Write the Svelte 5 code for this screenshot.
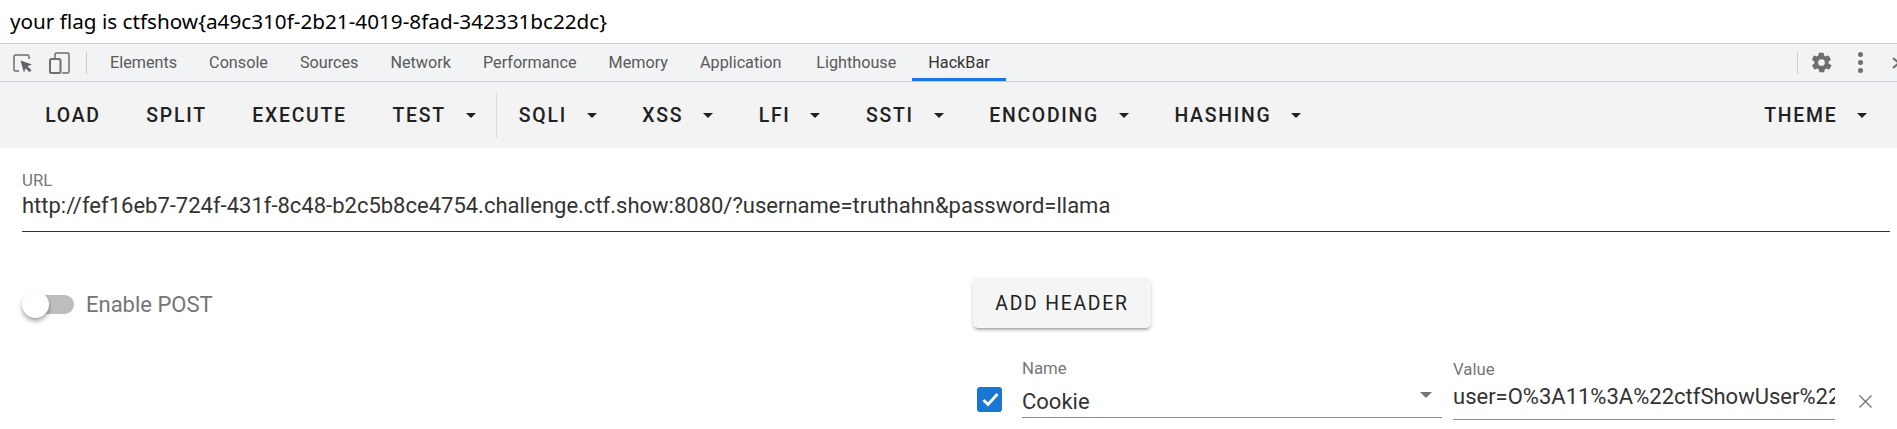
<script>
  const tabs = ['Elements', 'Console', 'Sources', 'Network', 'Performance', 'Memory', 'Application', 'Lighthouse', 'HackBar'];
  const leftMenu = [
    { label: 'LOAD' },
    { label: 'SPLIT' },
    { label: 'EXECUTE' },
    { label: 'TEST', arrow: true }
  ];
  const rightMenu = [
    { label: 'SQLI', arrow: true },
    { label: 'XSS', arrow: true },
    { label: 'LFI', arrow: true },
    { label: 'SSTI', arrow: true },
    { label: 'ENCODING', arrow: true },
    { label: 'HASHING', arrow: true }
  ];
  const url = 'http://fef16eb7-724f-431f-8c48-b2c5b8ce4754.challenge.ctf.show:8080/?username=truthahn&password=llama';
  const cookie = 'user=O%3A11%3A%22ctfShowUser%22%3A3%3A%7Bs%3A8%3A%22username%22';
</script>

{#snippet menuButton(item)}
  <button class="menu-btn">
    {item.label}
    {#if item.arrow}<span class="caret"></span>{/if}
  </button>
{/snippet}

<div class="page">
  <div class="flag">your flag is ctfshow&#123;a49c310f-2b21-4019-8fad-342331bc22dc&#125;</div>

  <div class="devtools">
    <svg class="inspect" width="20" height="20" viewBox="0 0 20 20">
      <path d="M6 18H2.500A1.500 1.500 0 0 1 1 16.500V3.500A1.500 1.500 0 0 1 2.500 2h12A1.500 1.500 0 0 1 16 3.500V6" fill="none" stroke="#6e6e6e" stroke-width="1.500" />
      <path d="M7.500 7.500l11.500 4-4.500 1.800 4 4-2 2-4-4-1.500 4.500z" fill="#5f6368" />
    </svg>
    <svg class="device" width="21" height="22" viewBox="0 0 21 22">
      <path d="M6 6V2.500A1.500 1.500 0 0 1 7.500 1h11A1.500 1.500 0 0 1 20 2.500v17a1.500 1.500 0 0 1-1.500 1.500H13" fill="none" stroke="#6e6e6e" stroke-width="1.500" />
      <rect x="1" y="7" width="10.500" height="14" rx="1.500" fill="none" stroke="#6e6e6e" stroke-width="2" />
    </svg>
    <span class="dt-sep"></span>
    <div class="tabs">
      {#each tabs as tab}
        <div class="tab" class:active={tab === 'HackBar'}>{tab}</div>
      {/each}
    </div>
    <div class="dt-right">
      <span class="dt-sep"></span>
      <svg class="gear" width="23" height="23" viewBox="0 0 24 24">
        <path fill="#6e6e6e" d="M19.400 13a7.600 7.600 0 0 0 0-2l2.200-1.700a.5.500 0 0 0 .1-.7l-2.100-3.600a.5.500 0 0 0-.6-.2l-2.600 1a7.600 7.600 0 0 0-1.700-1l-.4-2.700a.5.500 0 0 0-.5-.4h-4.200a.5.500 0 0 0-.5.400l-.4 2.700a7.600 7.600 0 0 0-1.700 1l-2.600-1a.5.500 0 0 0-.6.2L2.300 8.600a.5.500 0 0 0 .1.700L4.600 11a7.600 7.600 0 0 0 0 2l-2.200 1.700a.5.500 0 0 0-.1.700l2.100 3.600a.5.500 0 0 0 .6.2l2.600-1a7.600 7.600 0 0 0 1.700 1l.4 2.700a.5.500 0 0 0 .5.400h4.200a.5.500 0 0 0 .5-.4l.4-2.700a7.600 7.600 0 0 0 1.700-1l2.600 1a.5.500 0 0 0 .6-.2l2.100-3.600a.5.500 0 0 0-.1-.7zM12 15.500a3.500 3.500 0 1 1 0-7 3.500 3.500 0 0 1 0 7z" />
      </svg>
      <div class="dots"><i></i><i></i><i></i></div>
      <svg class="close-dt" width="10" height="14" viewBox="0 0 10 14">
        <path d="M1 2l6 5-6 5" fill="none" stroke="#6e6e6e" stroke-width="2" />
      </svg>
    </div>
  </div>

  <div class="toolbar">
    {#each leftMenu as item}
      {@render menuButton(item)}
    {/each}
    <span class="tool-sep"></span>
    {#each rightMenu as item}
      {@render menuButton(item)}
    {/each}
    <div class="spacer"></div>
    {@render menuButton({ label: 'THEME', arrow: true })}
  </div>

  <div class="url-field">
    <div class="small-label">URL</div>
    <div class="url-value">{url}</div>
  </div>

  <div class="lower">
    <div class="post-col">
      <div class="switch">
        <span class="track"></span>
        <span class="thumb"></span>
      </div>
      <span class="post-label">Enable POST</span>
    </div>
    <div class="header-col">
      <button class="add-header">ADD HEADER</button>
      <div class="header-row">
        <span class="checkbox">
          <svg width="25" height="25" viewBox="0 0 25 25">
            <path d="M6.500 13l4.500 4.500 9.500-10.500" fill="none" stroke="#fff" stroke-width="2.800" />
          </svg>
        </span>
        <div class="name-field">
          <div class="small-label">Name</div>
          <div class="select-line">
            <span class="select-text">Cookie</span>
            <span class="select-caret"></span>
          </div>
        </div>
        <div class="value-field">
          <div class="small-label">Value</div>
          <div class="value-line">{cookie}</div>
        </div>
        <svg class="remove" width="13" height="13" viewBox="0 0 13 13">
          <path d="M.5.5l12 12M12.500.5l-12 12" stroke="#757575" stroke-width="1.400" fill="none" />
        </svg>
      </div>
    </div>
  </div>
</div>

<style>
  :global(body) {
    margin: 0;
    background: #fff;
    overflow: hidden;
  }

  .page {
    width: 1897px;
    height: 429px;
    overflow: hidden;
    font-family: Roboto, sans-serif;
    color: #212121;
  }

  .flag {
    height: 43px;
    box-sizing: border-box;
    padding: 7px 0 0 10px;
    font-family: "Noto Sans", sans-serif;
    font-size: 20.700px;
    line-height: 28px;
    color: #000;
  }

  .devtools {
    height: 39px;
    box-sizing: border-box;
    display: flex;
    align-items: center;
    background: #f1f3f4;
    border-top: 1px solid #cbcdd0;
    border-bottom: 1px solid #cbcdd0;
    padding-left: 13px;
  }

  .device {
    margin-left: 16px;
  }

  .dt-sep {
    width: 1px;
    height: 22px;
    background: #ccc;
    margin-left: 16px;
  }

  .tabs {
    display: flex;
    height: 100%;
    margin-left: 7px;
  }

  .tab {
    padding: 0 16px;
    font-size: 16.200px;
    line-height: 37px;
    color: #5a5a5a;
    box-sizing: border-box;
    height: 37px;
  }

  .tab:nth-child(7) {
    padding-right: 19px;
  }

  .tab.active {
    color: #333;
    border-bottom: 3px solid #1a73e8;
  }

  .dt-right {
    margin-left: auto;
    display: flex;
    align-items: center;
  }

  .dt-right .dt-sep {
    margin: 0 12px 0 0;
  }

  .dots {
    display: flex;
    flex-direction: column;
    gap: 3px;
    margin: 0 29px 0 25px;
  }

  .dots i {
    width: 5px;
    height: 5px;
    border-radius: 50%;
    background: #6e6e6e;
  }

  .close-dt {
    margin-right: -5px;
  }

  .toolbar {
    height: 66px;
    display: flex;
    align-items: center;
    background: #f3f3f3;
    padding: 0 7px 0 22.400px;
  }

  .menu-btn {
    display: flex;
    align-items: center;
    height: 44px;
    padding: 0 22.800px;
    border: 0;
    background: none;
    font-family: Roboto, sans-serif;
    font-size: 19.400px;
    font-weight: 470;
    letter-spacing: 1.750px;
    color: #212121;
  }

  .caret {
    width: 0;
    height: 0;
    margin-left: 19.800px;
    border-left: 5px solid transparent;
    border-right: 5px solid transparent;
    border-top: 5px solid #212121;
  }

  .tool-sep {
    width: 1px;
    height: 45px;
    margin: 0 -1.300px 0 -2px;
    background: #dcdcdc;
  }

  .spacer {
    flex: 1;
  }

  .url-field {
    margin: 22px 7px 0 22px;
    height: 62px;
    box-sizing: border-box;
    border-bottom: 1px solid #333;
  }

  .small-label {
    font-size: 16.800px;
    line-height: 20px;
    color: #777;
  }

  .url-value {
    margin-top: 2px;
    font-size: 22px;
    line-height: 28px;
    white-space: nowrap;
    color: #333;
  }

  .lower {
    display: flex;
  }

  .post-col {
    width: 973px;
    box-sizing: border-box;
    padding: 59px 0 0 22px;
    display: flex;
    align-items: flex-start;
  }

  .switch {
    position: relative;
    width: 52px;
    height: 27px;
  }

  .track {
    position: absolute;
    left: 4px;
    right: 0;
    top: 4px;
    height: 19px;
    border-radius: 10px;
    background: #bdbdbd;
  }

  .thumb {
    position: absolute;
    left: 0;
    top: 0;
    width: 27px;
    height: 27px;
    border-radius: 50%;
    background: #fff;
    box-shadow: 0 3px 4px rgba(0, 0, 0, 0.35);
  }

  .post-label {
    margin-left: 12px;
    font-size: 22px;
    line-height: 27px;
    color: #757575;
  }

  .header-col {
    flex: 1;
    padding-top: 46px;
  }

  .add-header {
    display: block;
    width: 178px;
    height: 50px;
    border: 0;
    border-radius: 5px;
    background: #f5f5f5;
    box-shadow: 0 3px 3px -2px rgba(0, 0, 0, 0.3), 0 2px 4px rgba(0, 0, 0, 0.18);
    font-family: Roboto, sans-serif;
    font-size: 19.300px;
    font-weight: 450;
    letter-spacing: 1.800px;
    color: #212121;
  }

  .header-row {
    display: flex;
    align-items: flex-start;
    margin-top: 30px;
    padding-left: 4px;
  }

  .checkbox {
    width: 25px;
    height: 25px;
    margin-top: 29px;
    border-radius: 3px;
    background: #1976d2;
  }

  .checkbox svg {
    display: block;
  }

  .name-field {
    width: 420px;
    margin-left: 20px;
  }

  .select-line {
    display: flex;
    align-items: center;
    justify-content: space-between;
    height: 39px;
    font-size: 22px;
    color: #333;
    border-bottom: 1px solid #8a8a8a;
  }

  .select-text {
    margin-top: 7px;
  }

  .select-caret {
    width: 0;
    height: 0;
    margin: 0 10px 6px 0;
    border-left: 6px solid transparent;
    border-right: 6px solid transparent;
    border-top: 6px solid #757575;
  }

  .value-field {
    width: 382px;
    margin: 1px 0 0 11px;
  }

  .value-line {
    height: 40px;
    font-size: 22px;
    line-height: 36px;
    white-space: nowrap;
    overflow: hidden;
    color: #333;
    border-bottom: 1px solid #8a8a8a;
  }

  .remove {
    margin: 37px 0 0 24px;
  }
</style>
